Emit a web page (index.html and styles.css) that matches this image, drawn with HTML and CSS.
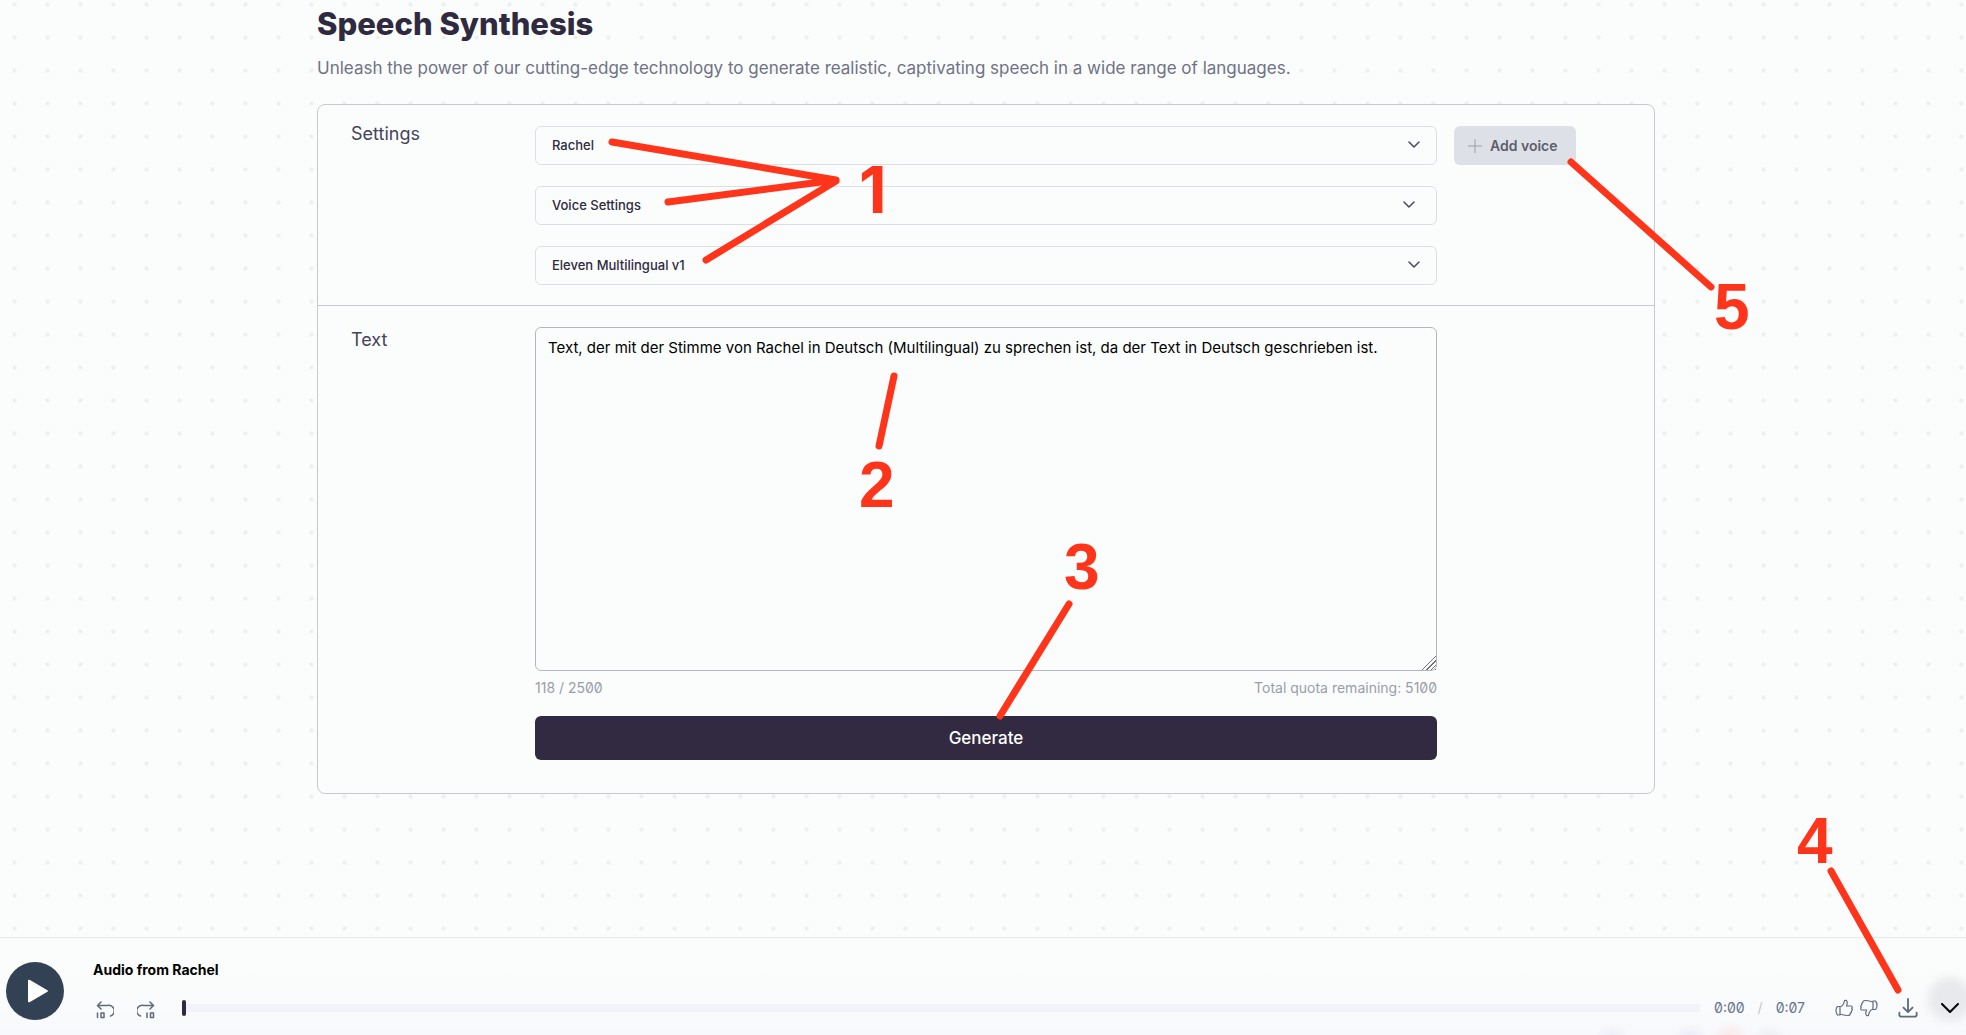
FILE: index.html
```html
<!DOCTYPE html>
<html lang="en">
<head>
    <meta charset="UTF-8">
    <meta name="viewport" content="width=device-width, initial-scale=1.0">
    <title>Speech Synthesis</title>
    <link rel="stylesheet" href="styles.css">
</head>
<body>

<main class="page">
    <div class="content">
        <h1>Speech Synthesis</h1>
        <p class="lead">Unleash the power of our cutting-edge technology to generate realistic, captivating speech in a wide range of languages.</p>

        <form class="card">
            <!-- Voice and model -->
            <section class="row settings">
                <h2>Settings</h2>
                <div class="fields">
                    <div class="field">
                        <select aria-label="Voice">
                            <option>Rachel</option>
                        </select>
                        <svg class="chevron" viewBox="0 0 12 8"><path d="M1 1l5 5 5-5"/></svg>
                    </div>
                    <button type="button" class="toggle">
                        Voice Settings
                        <svg class="chevron" viewBox="0 0 12 8"><path d="M1 1l5 5 5-5"/></svg>
                    </button>
                    <div class="field">
                        <select aria-label="Model">
                            <option>Eleven Multilingual v1</option>
                        </select>
                        <svg class="chevron" viewBox="0 0 12 8"><path d="M1 1l5 5 5-5"/></svg>
                    </div>
                </div>
                <div>
                    <button type="button" class="add-voice">
                        <svg viewBox="0 0 14 14"><path d="M7 0v14M0 7h14"/></svg>
                        Add voice
                    </button>
                </div>
            </section>

            <!-- Text to speak -->
            <section class="row text">
                <h2><label for="speech-text">Text</label></h2>
                <div>
                    <textarea id="speech-text">Text, der mit der Stimme von Rachel in Deutsch (Multilingual) zu sprechen ist, da der Text in Deutsch geschrieben ist.</textarea>
                    <div class="quota">
                        <span>118 / 2500</span>
                        <span>Total quota remaining: 5100</span>
                    </div>
                    <button type="button" class="generate">Generate</button>
                </div>
            </section>
        </form>
    </div>
</main>

<!-- Audio player -->
<footer class="player">
    <button type="button" class="play" aria-label="Play">
        <svg viewBox="0 0 22 24"><path d="M1 2v20q0 2 2 1l17-10q2-1 0-2L3 1Q1 0 1 2z"/></svg>
    </button>
    <div class="player-main">
        <div class="track-title">Audio from Rachel</div>
        <div class="controls">
            <button type="button" class="icon skip" aria-label="Back 10 seconds">
                <svg viewBox="0 0 18 18"><path d="M5 1L1.500 4.500 5 8M2 4.500h9a5.500 5.500 0 0 1 3.500 10.500M1.500 12v4.500M5 12h3v4.500h-3z"/></svg>
            </button>
            <button type="button" class="icon skip" aria-label="Forward 10 seconds">
                <svg viewBox="0 0 18 18"><path d="M13 1l3.500 3.500L13 8M16 4.500H7a5.500 5.500 0 0 0-3.500 10.500M10 12v4.500M13.500 12h3v4.500h-3z"/></svg>
            </button>
            <input type="range" class="seek" min="0" max="7" value="0" aria-label="Position">
            <div class="time"><span>0:00</span><span class="slash">/</span><span>0:07</span></div>
            <div class="votes">
                <button type="button" class="icon" aria-label="Like">
                    <svg viewBox="0 0 18 18"><path d="M5 8c3-1 4-3 4.500-6.500C12 .5 13 3 11.500 7H16c1.500 0 1.500 2 .7 2.500 1 .8.500 2-.4 2.500.5 1-.3 2-1 2.200 0 1.500-1 2.300-2.300 2.300-3 0-4.500-.5-8-1.500M5 8v7M5 7.500H2.500C.5 9 .5 14 2.500 16H5"/></svg>
                </button>
                <button type="button" class="icon" aria-label="Dislike">
                    <svg viewBox="0 0 18 18"><path d="M13 10c-3 1-4 3-4.500 6.500C6 17.500 5 15 6.500 11H2C.5 11 .5 9 1.300 8.500.3 7.700.8 6.500 1.700 6 1.200 5 2 4 2.700 3.800 2.700 2.300 3.700 1.500 5 1.500c3 0 4.500.5 8 1.500M13 10V3M13 10.500h2.500C17.500 9 17.500 4 15.500 2H13"/></svg>
                </button>
            </div>
            <button type="button" class="icon download" aria-label="Download">
                <svg viewBox="0 0 22 22"><path d="M11 1v14M6 10.500l5 5 5-5M1.500 16v2.500q0 2 2 2h15q2 0 2-2V16"/></svg>
            </button>
            <button type="button" class="icon collapse" aria-label="Collapse player">
                <svg viewBox="0 0 18 10"><path d="M1 1l8 8 8-8"/></svg>
            </button>
        </div>
    </div>
</footer>

<!-- Numbered callouts -->
<svg class="callouts" width="1966" height="1035" viewBox="0 0 1966 1035">
    <path d="M612 142L836 180L668 202M836 181L706 260"/>
    <path d="M894 376L879 446"/>
    <path d="M1069 604L1000 716"/>
    <path d="M1831 871L1898 990"/>
    <path d="M1571 162L1711 287"/>
    <text class="one" x="859" y="213">1</text>
    <text x="859" y="507">2</text>
    <text x="1064" y="589">3</text>
    <text x="1797" y="863">4</text>
    <text x="1714" y="329">5</text>
</svg>

</body>
</html>
```

FILE: styles.css
```css
* {
    box-sizing: border-box;
}
body {
    margin: 0;
    min-height: 100vh;
    display: flex;
    flex-direction: column;
    position: relative;
    overflow-x: hidden;
    font-family: Inter, sans-serif;
    color: #2f2a40;
    background-color: #fbfdfc;
    background-image: radial-gradient(circle, #edefef 1px, transparent 3px);
    background-size: 33px 33px;
    background-position: -2px -12px;
}
button, select, textarea {
    font-family: inherit;
    color: inherit;
}
button {
    border: none;
    padding: 0;
    background: none;
    cursor: pointer;
}
svg {
    fill: none;
    stroke: currentColor;
    stroke-linecap: round;
    stroke-linejoin: round;
}
.page {
    flex: 1;
    padding: 4px 0 32px 6px;
}
.content {
    max-width: 1338px;
    margin: 0 auto;
}
h1 {
    margin: 0;
    font-size: 31px;
    line-height: 40px;
    font-weight: 800;
}
.lead {
    margin: 8px 0 20px;
    font-size: 17px;
    line-height: 32px;
    color: #6f7285;
}
.card {
    border: 1px solid #c8cad0;
    border-radius: 8px;
    background-color: #fbfdfc;
}
.row {
    display: grid;
    grid-template-columns: 167px 1fr 167px;
    gap: 17px;
    padding: 21px 33px 20px;
}
.row + .row {
    border-top: 1px solid #c8cad0;
    padding-bottom: 33px;
}
h2 {
    margin: 0;
    font-size: 18px;
    line-height: 16px;
    font-weight: 400;
    color: #46435a;
}
.text h2 {
    padding-top: 5px;
}
.fields {
    display: flex;
    flex-direction: column;
    gap: 21px;
}
.field {
    position: relative;
    display: flex;
}
.field select, .toggle {
    appearance: none;
    width: 100%;
    height: 39px;
    padding: 0 16px 2px;
    border: 1px solid #dcdfe6;
    border-radius: 6px;
    background-color: #fbfdfc;
    font-size: 13px;
    font-weight: 500;
    text-align: left;
}
.toggle {
    display: flex;
    align-items: center;
    justify-content: space-between;
    padding-right: 21px;
}
.chevron {
    width: 12px;
    height: 8px;
    color: #4c495c;
    stroke-width: 1.5;
}
.field .chevron {
    position: absolute;
    top: 15px;
    right: 17px;
    pointer-events: none;
}
.add-voice {
    display: flex;
    align-items: center;
    gap: 8px;
    height: 39px;
    padding: 0 18px 0 14px;
    border-radius: 6px;
    background-color: #dde0e7;
    color: #5e5e6e;
    font-size: 14px;
    font-weight: 600;
    white-space: nowrap;
}
.add-voice svg {
    width: 14px;
    height: 14px;
    color: #9b9ea9;
}
textarea {
    display: block;
    width: 100%;
    height: 344px;
    padding: 8px 12px;
    border: 1px solid #b5b7c0;
    border-radius: 6px;
    background-color: #fbfdfc;
    color: #000;
    font-size: 15px;
    line-height: 24px;
}
textarea::-webkit-resizer {
    background:
        linear-gradient(135deg, #fbfdfc 50%, transparent 50%),
        repeating-linear-gradient(135deg, transparent 0 2px, #70727a 2px 3px);
}
.quota {
    display: flex;
    justify-content: space-between;
    padding: 7px 0 18px;
    font-size: 14px;
    line-height: 20px;
    color: #9a9da8;
    font-feature-settings: "zero";
}
.generate {
    display: block;
    width: 100%;
    height: 44px;
    border-radius: 6px;
    background-color: #312a40;
    color: #fff;
    font-size: 17px;
    font-weight: 500;
}
.player {
    display: flex;
    align-items: center;
    gap: 29px;
    height: 98px;
    padding: 9px 7px 0 6px;
    border-top: 1px solid #e6e9eb;
    background:
        radial-gradient(circle at 82% 106%, #e9ecf7, transparent 18px),
        radial-gradient(circle at 86% 106%, #e6e9f8, transparent 18px),
        radial-gradient(circle at 88% 106%, #fbe3e5, transparent 20px),
        radial-gradient(circle at 90% 106%, #ebecef, transparent 18px),
        linear-gradient(#fbfdfc 30%, #f8f9fc);
}
.play {
    display: flex;
    align-items: center;
    justify-content: center;
    flex: none;
    width: 58px;
    height: 58px;
    padding-left: 6px;
    border-radius: 50%;
    background-color: #334155;
    color: #fff;
}
.play svg {
    width: 22px;
    height: 24px;
    fill: #fff;
    stroke: none;
}
.player-main {
    flex: 1;
    padding-top: 5px;
}
.track-title {
    margin-bottom: 8px;
    font-size: 14px;
    line-height: 20px;
    font-weight: 700;
    color: #000;
}
.controls {
    display: flex;
    align-items: center;
    height: 40px;
}
.icon {
    display: flex;
    flex: none;
    color: #5f6b7c;
}
.icon svg {
    width: 18px;
    height: 18px;
}
.skip {
    margin: 4px 20px 0 3px;
}
.skip svg {
    stroke-width: 1.5;
}
.seek {
    appearance: none;
    flex: 1;
    height: 16px;
    margin: 0 14px 0 7px;
    background: linear-gradient(#f1f3f9, #f1f3f9) center / 100% 8px no-repeat;
}
.seek::-webkit-slider-thumb {
    appearance: none;
    width: 4px;
    height: 16px;
    border-radius: 2px;
    background-color: #2f2a40;
}
.time {
    display: flex;
    gap: 13px;
    font-size: 14px;
    color: #64748b;
    font-feature-settings: "zero";
}
.slash {
    color: #c3c8d2;
}
.votes {
    display: flex;
    gap: 7px;
    margin: 0 20px 0 30px;
    stroke-width: 1.2;
}
.download svg {
    width: 20px;
    height: 20px;
    stroke-width: 2;
}
.collapse {
    position: relative;
    margin-left: 23px;
    color: #000;
}
/* soft halo behind the arrow */
.collapse::before {
    content: "";
    position: absolute;
    left: -13px;
    top: -26px;
    width: 44px;
    height: 44px;
    border-radius: 50%;
    background-color: #e8e9ec;
    filter: blur(4px);
}
.collapse svg {
    position: relative;
    height: 10px;
    stroke-width: 2;
}
.callouts {
    position: absolute;
    top: 0;
    left: 0;
    pointer-events: none;
    stroke: #ff351b;
    stroke-width: 7;
}
.callouts text {
    fill: #ff351b;
    stroke: none;
    font: bold 64px "Liberation Sans", Arial, sans-serif;
}
.callouts .one {
    font-family: Inter, sans-serif;
}
```
